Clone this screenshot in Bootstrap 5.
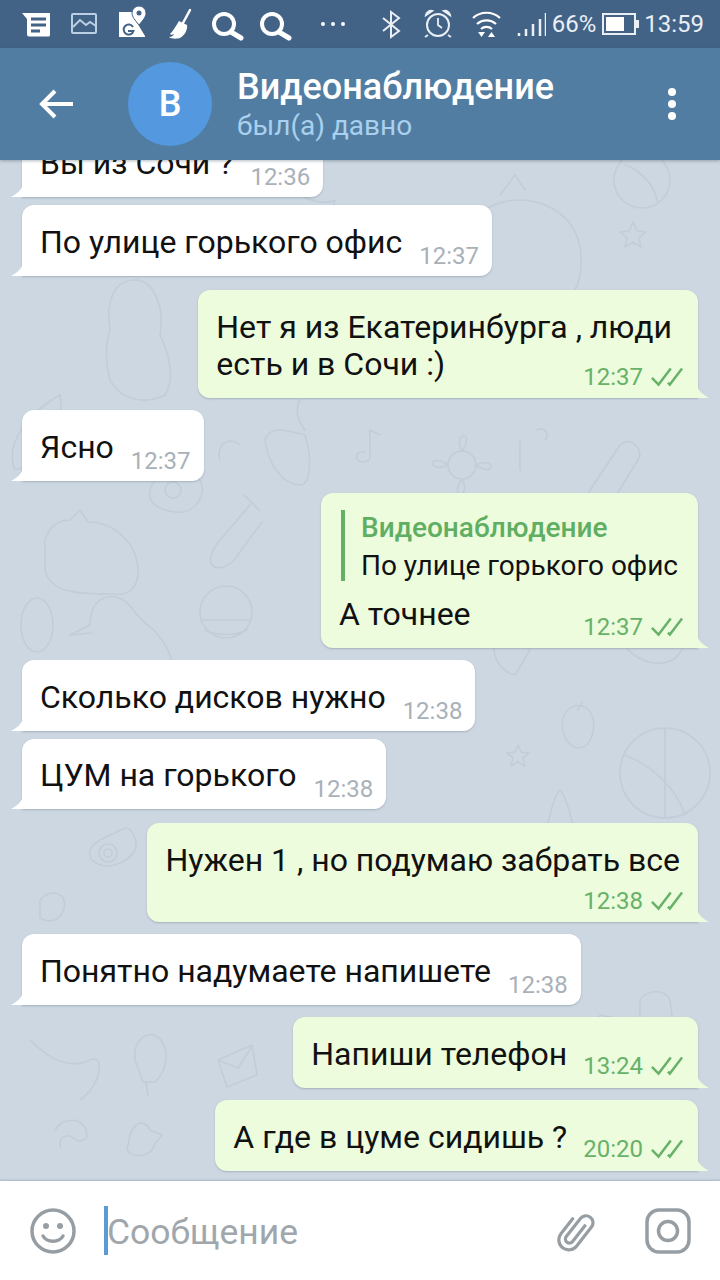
<!DOCTYPE html>
<html lang="en">
<head>
    <meta charset="UTF-8">
    <meta name="viewport" content="width=device-width, initial-scale=1.0">
    <title>Видеонаблюдение</title>
    <link href="https://cdn.jsdelivr.net/npm/bootstrap@5.3.3/dist/css/bootstrap.min.css" rel="stylesheet">
    <style>
        html, body { height: 100%; }
        body { font-family: Roboto, "Noto Sans", sans-serif; background: #cdd7e1; overflow: hidden; }
        .phone { width: 720px; height: 1280px; }

        .status-strip { height: 48px; background: #436386; color: #e9eff5; flex: none; }
        .status-text { font-size: 24px; line-height: 48px; }
        .batt-label { margin-left: 6px; margin-right: 6px; }
        .clock-label { margin-left: 4px; margin-right: 16px; }

        .chat-head { height: 112px; background: #527da3; flex: none; z-index: 2; box-shadow: 0 1px 3px rgba(40, 60, 80, .35); }
        .back-btn { margin-left: 38px; width: 36px; }
        .head-avatar { width: 84px; height: 84px; margin-left: 54px; background: #5499df; color: #fff; font-size: 36px; font-weight: 500; }
        .head-info { margin-left: 25px; padding-top: 3px; }
        .head-title { font-size: 36px; font-weight: 500; line-height: 40px; color: #fff; }
        .head-sub { font-size: 28px; line-height: 38px; color: #a9d0ee; }
        .head-menu { margin-right: 43px; }

        .chat-area { background: #cdd7e1; padding-bottom: 10px; overflow: hidden; min-height: 0; }
        .doodles { position: absolute; left: 0; top: 0; width: 720px; height: 1021px; }
        .doodles * { fill: none; stroke: #c1cdd8; stroke-width: 1.6; stroke-linecap: round; stroke-linejoin: round; }

        .bubble { position: relative; flex: none; padding: 19px 13px 15px 18px; font-size: 32px; line-height: 37px; color: #111; border-radius: 12px; box-shadow: 0 1px 2px rgba(90, 110, 130, .35); }
        .bubble::after { content: ""; position: absolute; bottom: 0; width: 13px; height: 16px; }
        .bubble-in { align-self: flex-start; margin-left: 22px; background: #fff; border-bottom-left-radius: 0; }
        .bubble-in::after { left: -11px; background: #fff; clip-path: path("M13 0 C12 8 6 13 0 16 L13 16 Z"); }
        .bubble-out { align-self: flex-end; margin-right: 22px; background: #ecfcdc; border-bottom-right-radius: 0; padding-left: 18px; padding-right: 15px; }
        .bubble-out::after { right: -11px; background: #ecfcdc; clip-path: path("M0 0 C1 8 7 13 13 16 L0 16 Z"); }
        .gap-same { margin-top: 8px; }
        .gap-other { margin-top: 12px; }
        .gap-wide { margin-top: 14px; }
        .bubble-snug { padding-top: 18px; }

        /* stamp sits on top of the last text line */
        .bubble-stack { display: grid; }
        .bubble-stack > * { grid-area: 1 / 1; }
        .bubble-column { display: flex; flex-direction: column; padding-right: 18px; }

        .stamp { padding-left: 17px; font-size: 24px; line-height: 24px; white-space: nowrap; align-self: flex-end; position: relative; top: 7px; color: #a9b1b8; }
        .bubble-out .stamp { color: #68b169; top: 5px; padding-left: 16px; }
        .bubble-out.bubble-stack .stamp, .bubble-out.bubble-column .stamp { top: 6px; }
        .bubble-stack .stamp { justify-self: end; align-self: end; }
        .bubble-column .stamp { margin-top: 4px; margin-right: -3px; }
        .stamp svg { margin-left: 8px; vertical-align: -2px; }

        .body-wide { padding-right: 11px; }
        .reply-wrap { padding-right: 5px; }
        .reply-box { border-left: 4px solid #66b066; padding-left: 16px; margin: -2px 0 15px 2px; font-size: 28px; white-space: nowrap; }
        .reply-name { color: #5fae62; font-weight: 500; line-height: 36px; }
        .reply-quote { line-height: 30px; margin-top: 5px; }

        .input-strip { height: 99px; background: #fff; flex: none; z-index: 2; box-shadow: 0 -1px 2px rgba(60, 80, 100, .25); }
        .smile-btn { margin-left: 30px; }
        .caret-bar { width: 4px; height: 49px; margin-left: 28px; background: #5a9bd5; }
        .placeholder-text { font-size: 35.5px; color: #a0a7ac; margin-left: -1px; padding-top: 4px; }
        .clip-btn { margin-right: 48px; }
        .cam-btn { margin-right: 29px; }
    </style>
</head>
<body>
    <div class="phone d-flex flex-column">
        <div class="status-strip d-flex align-items-center">
            <svg width="350" height="48" viewBox="0 0 350 48">
                <path d="M22 13h28v22a1.500 1.500 0 0 1-1.500 1.500H29a2 2 0 0 1-2-2V19z" fill="#fff"/>
                <path d="M31 19h15M31 25h15M31 31h9" stroke="#436386" stroke-width="3"/>
                <rect x="72" y="14" width="24" height="19" rx="1" fill="none" stroke="#bcd0e3" stroke-width="2"/>
                <path d="M73 27l7-7 6 5 4-3 6 4" fill="none" stroke="#bcd0e3" stroke-width="2"/>
                <path d="M119 12h14v4l12 20v1h-26z" fill="#fff"/>
                <path d="M139 25c-4-5-7-8-7-12a7 7 0 0 1 14 0c0 4-3 7-7 12z" fill="#fff" stroke="#436386" stroke-width="1"/>
                <circle cx="139" cy="13" r="2.500" fill="#436386"/>
                <path d="M133 27a5 5 0 1 0 .5 4H128" fill="none" stroke="#436386" stroke-width="2"/>
                <path d="M190 10l-7 13" stroke="#fff" stroke-width="2.500" stroke-linecap="round"/>
                <path d="M179 21l8 4c1 5-3 11-7 13-3 1-9 1-11-1 3 0 4-1 5-3-2 1-3 1-4 0 3-3 6-8 9-13z" fill="#fff"/>
                <circle cx="224" cy="24" r="10" fill="none" stroke="#fff" stroke-width="4"/>
                <path d="M231 32l10 6" stroke="#fff" stroke-width="5" stroke-linecap="round"/>
                <circle cx="272" cy="24" r="10" fill="none" stroke="#fff" stroke-width="4"/>
                <path d="M279 32l10 6" stroke="#fff" stroke-width="5" stroke-linecap="round"/>
                <circle cx="323" cy="24" r="2" fill="#fff"/>
                <circle cx="333" cy="24" r="2" fill="#fff"/>
                <circle cx="343" cy="24" r="2" fill="#fff"/>
            </svg>
            <svg class="ms-auto" width="180" height="48" viewBox="366 0 180 48">
                <path d="M383 18l16 13-8 6V12l8 6-16 13" fill="none" stroke="#e9eff5" stroke-width="2"/>
                <circle cx="438" cy="25" r="11" fill="none" stroke="#e9eff5" stroke-width="2"/>
                <path d="M438 18v7l4 3M428 35l-3 2M448 35l3 2" fill="none" stroke="#e9eff5" stroke-width="1.800"/>
                <path d="M426 15a5 5 0 0 1 6-4zM450 15a5 5 0 0 0-6-4z" fill="none" stroke="#e9eff5" stroke-width="2"/>
                <path d="M473 18a20 20 0 0 1 27 0M477 24a14 14 0 0 1 19 0M481 29a8 8 0 0 1 11 0" fill="none" stroke="#fff" stroke-width="2.200"/>
                <path d="M478 32h7l-3.500 5zM488 37h7l-3.500-5z" fill="#fff"/>
                <path d="M519 33v3M526 29v7M533 24v12M540 19v17M546 13v23" stroke="#e9eff5" stroke-width="2.500"/>
            </svg>
            <span class="status-text batt-label">66%</span>
            <svg width="38" height="24" viewBox="0 0 38 24">
                <rect x="1" y="2" width="32" height="20" fill="none" stroke="#e9eff5" stroke-width="2"/>
                <rect x="4" y="5" width="18" height="14" fill="#fff"/>
                <rect x="34" y="8" width="3" height="8" fill="#e9eff5"/>
            </svg>
            <span class="status-text clock-label">13:59</span>
        </div>

        <div class="chat-head d-flex align-items-center">
            <svg class="back-btn" width="36" height="32" viewBox="0 0 36 32">
                <path d="M35 16H5M17 3L4 16l13 13" fill="none" stroke="#fff" stroke-width="4"/>
            </svg>
            <div class="head-avatar rounded-circle d-flex align-items-center justify-content-center">В</div>
            <div class="head-info flex-grow-1">
                <div class="head-title">Видеонаблюдение</div>
                <div class="head-sub">был(а) давно</div>
            </div>
            <svg class="head-menu" width="10" height="34" viewBox="0 0 10 34">
                <circle cx="5" cy="5" r="4" fill="#fff"/>
                <circle cx="5" cy="17" r="4" fill="#fff"/>
                <circle cx="5" cy="29" r="4" fill="#fff"/>
            </svg>
        </div>

        <div class="chat-area flex-grow-1 d-flex flex-column justify-content-end position-relative">
            <svg class="doodles" viewBox="0 160 720 1021">
                <path d="M470 225c15-25 50-30 75-20 30 12 40 40 35 70-4 25-25 35-40 25M500 195l15-20 10 15M470 225l-20 5"/>
                <circle cx="642" cy="180" r="28"/><path d="M625 165c15 5 30 20 32 36"/>
                <path d="M633 222l4 9 9 1-7 6 2 9-8-5-8 5 2-9-7-6 9-1z"/>
                <path d="M110 330c-5-30 5-50 25-50s30 30 25 55c10 20 15 45 5 60-20 10-45 5-55-15-5-20-5-35 0-50z"/>
                <path d="M15 470c-10-25 10-55 45-75 5 30-10 65-45 75z"/><circle cx="40" cy="430" r="3"/><circle cx="30" cy="450" r="3"/>
                <path d="M45 540c5-15 15-20 25-20l10-10 8 12c25 0 50 20 50 50 0 15-10 25-25 22-30 0-65 0-68-25z"/>
                <path d="M90 625c0-20 10-30 25-28 15 2 20 20 35 30 10 8 22 25 22 40M90 625l-20 10 22-2"/>
                <ellipse cx="37" cy="625" rx="16" ry="27"/>
                <circle cx="226" cy="612" r="26"/><path d="M202 620h48M205 630c10 6 30 6 42 0"/>
                <path d="M250 505l-30 35c-8 10-12 20-8 25s15 3 22-5l28-38M244 495l15 15"/>
                <path d="M150 490c5-20 40-25 50-10 8 14-5 35-25 32-15-2-28-8-25-22z"/><circle cx="173" cy="490" r="8"/>
                <circle cx="462" cy="465" r="14"/><path d="M462 451c-10-20 14-20 0 0M476 465c20-10 20 14 0 0M462 479c10 20-14 20 0 0M448 465c-20 10-20-14 0 0"/>
                <path d="M590 490l30-45c10-10 25 5 18 15l-28 45c-10 8-26-5-20-15z"/>
                <path d="M370 430v28a7 5 0 1 1-5-6M370 430l10 5"/>
                <path d="M265 440c5-15 20-10 40-5 8 25 5 50-5 50s-30-10-35-45zM300 400c-5 10-3 20 5 30"/>
                <path d="M220 460c-5-15 10-25 20-15M545 440c5-6 0-14-8-10M520 440v30"/>
                <path d="M550 590c-20 15-15 45 5 50s35-15 30-35-20-25-35-15z"/>
                <path d="M620 620c20-10 50-5 60 15 8 15-5 30-25 28-25-2-45-30-35-43z"/>
                <path d="M568 710c5-6 18-6 22 2 8 12 2 36-11 36s-24-24-11-38zM578 710l4-8"/>
                <circle cx="665" cy="773" r="45"/><path d="M665 728v90M625 755c25 10 50 30 60 60"/>
                <path d="M518 745l3 7 8 1-6 5 2 8-7-4-7 4 2-8-6-5 8-1z"/>
                <path d="M545 840c5-30 10-45 15-50 5 5 12 25 15 50-8 8-22 8-30 0z"/>
                <path d="M495 640c10-5 30 0 35 10l-15 25c-10-2-25-15-20-35z"/>
                <path d="M92 860c-6-8 0-15 8-20l25-12c8 0 13 14 10 22-8 14-30 22-43 10z"/><circle cx="108" cy="853" r="9"/><circle cx="108" cy="853" r="4"/>
                <path d="M40 900c12-14 28-5 24 8-3 12-14 16-24 10z"/>
                <path d="M218 1060l34-15 5 30-30 12zM218 1060l20 8 14-22"/>
                <path d="M135 1060c-3-25 22-36 30-12 3 15-2 26-10 34h-12zM146 1082l2 14"/>
                <path d="M30 1040c20 20 40 30 60 20 15-7 12 25-10 40"/>
                <path d="M55 1130c10-15 30-12 32 4 1 6-8 10-14 4-8-6-16 2-12 10"/>
                <path d="M130 1135c5-15 15-15 20-5l12 5-8 10c0 10-20 15-27 5z"/>
                <path d="M640 1000c5-10 25-12 30 0l5 40c-15 8-30 2-35-8z"/>
                <path d="M590 1040l10-25 25 5-10 28z"/>
                <path d="M300 195c8 5 25 10 35 5l-5 20"/>
            </svg>

            <div class="bubble bubble-in d-flex"><span>Вы из Сочи ?</span><span class="stamp">12:36</span></div>
            <div class="bubble bubble-in gap-same d-flex"><span>По улице горького офис</span><span class="stamp">12:37</span></div>
            <div class="bubble bubble-out bubble-stack gap-wide">
                <span class="body-wide">Нет я из Екатеринбурга , люди<br>есть и в Сочи :)</span>
                <span class="stamp">12:37<svg width="32" height="20" viewBox="0 0 34 20"><path d="M1 11l7 7L21 1M18 16l2 2L33 1" fill="none" stroke="#68b169" stroke-width="2.600"/></svg></span>
            </div>
            <div class="bubble bubble-in gap-other d-flex"><span>Ясно</span><span class="stamp">12:37</span></div>
            <div class="bubble bubble-out bubble-stack gap-other">
                <div class="reply-wrap">
                    <div class="reply-box"><div class="reply-name">Видеонаблюдение</div><div class="reply-quote">По улице горького офис</div></div>
                    <div>А точнее</div>
                </div>
                <span class="stamp">12:37<svg width="32" height="20" viewBox="0 0 34 20"><path d="M1 11l7 7L21 1M18 16l2 2L33 1" fill="none" stroke="#68b169" stroke-width="2.600"/></svg></span>
            </div>
            <div class="bubble bubble-in gap-other d-flex"><span>Сколько дисков нужно</span><span class="stamp">12:38</span></div>
            <div class="bubble bubble-in bubble-snug gap-same d-flex"><span>ЦУМ на горького</span><span class="stamp">12:38</span></div>
            <div class="bubble bubble-out bubble-column gap-wide">
                <span>Нужен 1 , но подумаю забрать все</span>
                <span class="stamp">12:38<svg width="32" height="20" viewBox="0 0 34 20"><path d="M1 11l7 7L21 1M18 16l2 2L33 1" fill="none" stroke="#68b169" stroke-width="2.600"/></svg></span>
            </div>
            <div class="bubble bubble-in gap-other d-flex"><span>Понятно надумаете напишете</span><span class="stamp">12:38</span></div>
            <div class="bubble bubble-out gap-other d-flex">
                <span>Напиши телефон</span>
                <span class="stamp">13:24<svg width="32" height="20" viewBox="0 0 34 20"><path d="M1 11l7 7L21 1M18 16l2 2L33 1" fill="none" stroke="#68b169" stroke-width="2.600"/></svg></span>
            </div>
            <div class="bubble bubble-out gap-other d-flex">
                <span>А где в цуме сидишь ?</span>
                <span class="stamp">20:20<svg width="32" height="20" viewBox="0 0 34 20"><path d="M1 11l7 7L21 1M18 16l2 2L33 1" fill="none" stroke="#68b169" stroke-width="2.600"/></svg></span>
            </div>
        </div>

        <div class="input-strip d-flex align-items-center">
            <svg class="smile-btn" width="46" height="46" viewBox="0 0 46 46">
                <circle cx="23" cy="23" r="21" fill="none" stroke="#979ea3" stroke-width="3.500"/>
                <circle cx="16" cy="18" r="3" fill="#979ea3"/>
                <circle cx="30" cy="18" r="3" fill="#979ea3"/>
                <path d="M13 28c4 7 16 7 20 0" fill="none" stroke="#979ea3" stroke-width="3.500" stroke-linecap="round"/>
            </svg>
            <div class="caret-bar"></div>
            <div class="placeholder-text flex-grow-1">Сообщение</div>
            <svg class="clip-btn" width="40" height="46" viewBox="0 0 40 46">
                <path d="M23 14v20a4 4 0 0 1-8 0V11a7 7 0 0 1 14 0v24a10 10 0 0 1-20 0V16" fill="none" stroke="#979ea3" stroke-width="3.200" stroke-linecap="round" transform="rotate(38 20 23)"/>
            </svg>
            <svg class="cam-btn" width="46" height="46" viewBox="0 0 46 46">
                <rect x="2" y="2" width="42" height="42" rx="12" fill="none" stroke="#979ea3" stroke-width="3.500"/>
                <circle cx="23" cy="23" r="9.500" fill="none" stroke="#979ea3" stroke-width="3.500"/>
            </svg>
        </div>
    </div>

    <script src="https://cdn.jsdelivr.net/npm/bootstrap@5.3.3/dist/js/bootstrap.bundle.min.js"></script>
</body>
</html>
